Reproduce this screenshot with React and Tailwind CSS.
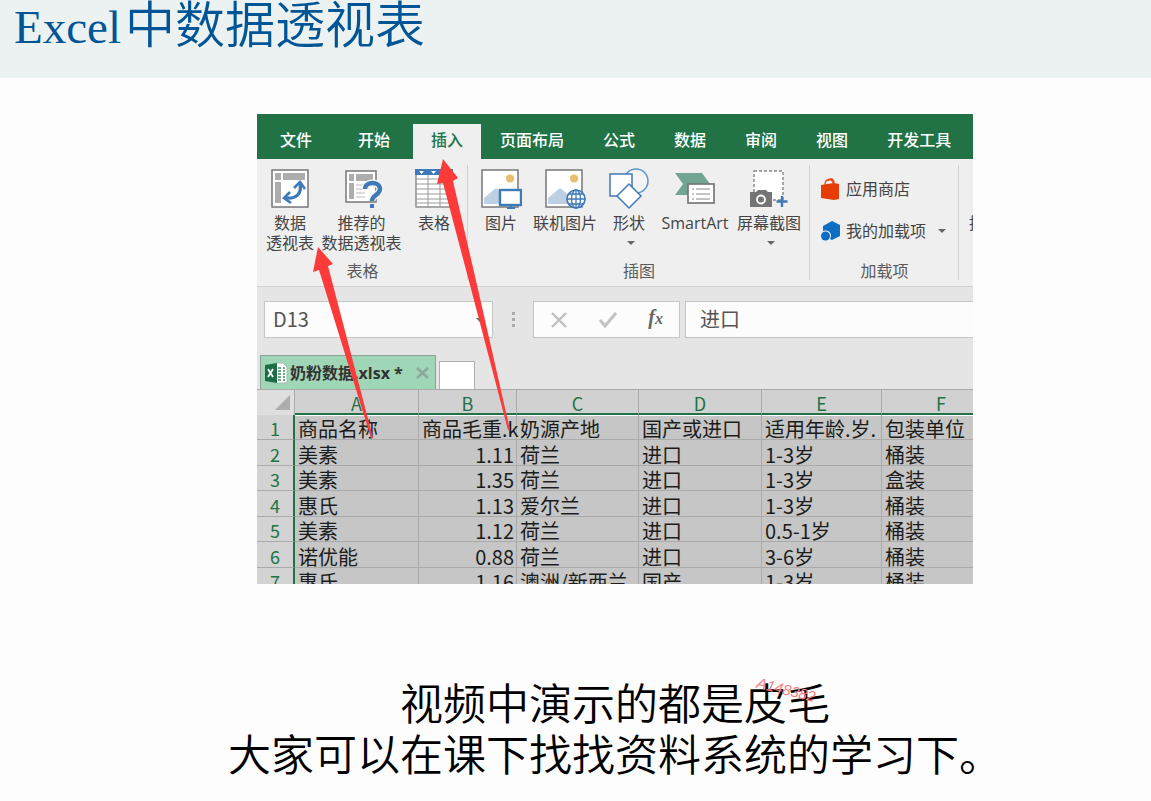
import React from "react";

const menu = ["页面布局", "公式", "数据", "审阅", "视图", "开发工具"];

const columns = ["A", "B", "C", "D", "E", "F"];

const rows = [
  ["商品名称", "商品毛重.k", "奶源产地", "国产或进口", "适用年龄.岁.", "包装单位"],
  ["美素", "1.11", "荷兰", "进口", "1-3岁", "桶装"],
  ["美素", "1.35", "荷兰", "进口", "1-3岁", "盒装"],
  ["惠氏", "1.13", "爱尔兰", "进口", "1-3岁", "桶装"],
  ["美素", "1.12", "荷兰", "进口", "0.5-1岁", "桶装"],
  ["诺优能", "0.88", "荷兰", "进口", "3-6岁", "桶装"],
  ["惠氏", "1.16", "澳洲/新西兰", "国产", "1-3岁", "桶装"],
];

function PivotIcon() {
  return (
    <svg width="40" height="40" viewBox="0 0 40 40" aria-hidden="true">
      <rect x="2" y="1" width="36" height="37" fill="#fff" stroke="#777" strokeWidth="1.5" />
      <path d="M5 4h6v7H5zM13 4h22v7H13zM5 13h6v21H5z" fill="#adadad" />
      <path d="M16 29C26 30 32 25 30 15" fill="none" stroke="#3e7ab8" strokeWidth="3.2" />
      <path d="M20 23l-6 6 7 5M24 19l6-6 5 7" fill="none" stroke="#3e7ab8" strokeWidth="2.6" />
    </svg>
  );
}

function RecommendIcon() {
  return (
    <svg width="42" height="42" viewBox="0 0 42 42" aria-hidden="true">
      <rect x="5" y="3" width="30" height="31" fill="#fff" stroke="#777" strokeWidth="1.5" />
      <path d="M8 6h5v7H8zM15 6h17v7H15zM8 15h5v16H8z" fill="#adadad" />
      <path d="M15 17h9M15 21h7M15 25h9M15 29h9" stroke="#bbb" />
      <path d="M24 21c0-8 15-8 15 0 0 6-8 6-8 12" fill="none" stroke="#f5f5f5" strokeWidth="7" />
      <path d="M24 21c0-8 15-8 15 0 0 6-8 6-8 12" fill="none" stroke="#3e7ab8" strokeWidth="4.4" />
      <path d="M29 36h4v4h-4z" fill="#3e7ab8" />
    </svg>
  );
}

function TableIcon() {
  return (
    <svg width="40" height="40" viewBox="0 0 40 40" aria-hidden="true">
      <rect x="2" y="1" width="36" height="37" fill="#fff" stroke="#888" strokeWidth="1.4" />
      <path d="M2 10h36M2 15h36M2 20h36M2 25h36M2 30h36M2 34h36M14 6v32M26 6v32" stroke="#999" />
      <path d="M1 0h38v6H1z" fill="#3e7ab8" />
      <path d="M5 2h5l-2.500 3zM17 2h5l-2.500 3zM29 2h5l-2.500 3z" fill="#fff" />
    </svg>
  );
}

function Photo() {
  return (
    <>
      <rect x="2" y="1" width="36" height="37" fill="#fff" stroke="#777" strokeWidth="1.5" />
      <circle cx="30" cy="9.500" r="4" fill="#e9be72" />
      <path d="M4 35v-6l12-10 11 9v7z" fill="#bccfe3" />
    </>
  );
}

function PictureIcon() {
  return (
    <svg width="42" height="40" viewBox="0 0 42 40" aria-hidden="true">
      <Photo />
      <rect x="20" y="21" width="21" height="15" fill="#fff" stroke="#3e7ab8" strokeWidth="2.4" />
      <path d="M27 39h8M31 36v3" stroke="#3e7ab8" strokeWidth="2" />
    </svg>
  );
}

function OnlinePictureIcon() {
  return (
    <svg width="42" height="40" viewBox="0 0 42 40" aria-hidden="true">
      <Photo />
      <circle cx="32" cy="30" r="9" fill="#fff" stroke="#3e7ab8" strokeWidth="1.7" />
      <path d="M23 30h18M25 25h14M25 35h14M32 21v18" stroke="#3e7ab8" strokeWidth="1.3" />
      <ellipse cx="32" cy="30" rx="4.500" ry="9" fill="none" stroke="#3e7ab8" strokeWidth="1.3" />
    </svg>
  );
}

function ShapesIcon() {
  return (
    <svg width="40" height="42" viewBox="0 0 40 42" aria-hidden="true">
      <circle cx="27" cy="13" r="12" fill="#f4f4f4" stroke="#5b93cc" strokeWidth="1.5" />
      <rect x="1" y="6" width="22" height="22" fill="#fff" stroke="#3e7ab8" strokeWidth="1.5" />
      <path d="M20 16l12 12-12 12L8 28z" fill="#fff" stroke="#3e7ab8" strokeWidth="1.5" />
    </svg>
  );
}

function SmartArtIcon() {
  return (
    <svg width="40" height="40" viewBox="0 0 40 40" aria-hidden="true">
      <path d="M0 4h27l8 11-9 11H0l8-11z" fill="#72a592" />
      <rect x="13" y="15" width="26" height="19" fill="#fff" stroke="#777" strokeWidth="1.7" />
      <path d="M21 20h14M21 25h14M21 30h14M17 20h2M17 25h2M17 30h2" stroke="#888" />
    </svg>
  );
}

function ScreenshotIcon() {
  return (
    <svg width="40" height="40" viewBox="0 0 40 40" aria-hidden="true">
      <rect x="5" y="2" width="29" height="29" fill="#fff" stroke="#888" strokeWidth="1.400" strokeDasharray="3 2" />
      <path d="M1 23h6l2-2h8l2 2h4v15H1z" fill="#747474" />
      <circle cx="12" cy="30.500" r="4" fill="none" stroke="#fff" strokeWidth="1.800" />
      <path d="M33 27v11M27.500 32.500h11" stroke="#3e7ab8" strokeWidth="2.400" />
    </svg>
  );
}

function Caret() {
  return (
    <svg width="8" height="4" viewBox="0 0 8 4" aria-hidden="true">
      <path d="M0 0h8L4 4z" fill="#666" />
    </svg>
  );
}

function Tool({ icon, lines, width, caret }) {
  return (
    <button type="button" className={`flex shrink-0 flex-col items-center ${width}`}>
      <span className="flex h-[46px] items-center pb-0.5">{icon}</span>
      {lines.map((line) => (
        <span key={line} className="whitespace-nowrap text-[16px] leading-5">
          {line}
        </span>
      ))}
      {caret && (
        <span className="flex h-5 items-center pl-1">
          <Caret />
        </span>
      )}
    </button>
  );
}

function Group({ label, children }) {
  return (
    <section className="flex shrink-0 flex-col justify-between">
      <div className="flex">{children}</div>
      <h2 className="text-center text-[16px] leading-5 text-[#5a5a5a]">{label}</h2>
    </section>
  );
}

function Divider() {
  return <div className="-ml-px my-1.5 w-px shrink-0 bg-[#d2d2d2]" />;
}

function Ribbon() {
  return (
    <div className="flex h-[128px] overflow-hidden border-b border-[#d0d0d0] bg-[#efefef] text-[#444]">
      <div className="flex shrink-0 pb-[5px] pt-2">
        <Group label="表格">
          <Tool width="w-[66px]" icon={<PivotIcon />} lines={["数据", "透视表"]} />
          <Tool width="w-[77px]" icon={<RecommendIcon />} lines={["推荐的", "数据透视表"]} />
          <Tool width="w-[68px]" icon={<TableIcon />} lines={["表格"]} />
        </Group>
      </div>
      <Divider />
      <div className="flex shrink-0 pb-[5px] pt-2">
        <Group label="插图">
          <Tool width="w-[66px]" icon={<PictureIcon />} lines={["图片"]} />
          <Tool width="w-[62px]" icon={<OnlinePictureIcon />} lines={["联机图片"]} />
          <Tool width="w-[66px]" icon={<ShapesIcon />} lines={["形状"]} caret />
          <Tool width="w-[66px]" icon={<SmartArtIcon />} lines={["SmartArt"]} />
          <Tool width="w-[82px]" icon={<ScreenshotIcon />} lines={["屏幕截图"]} caret />
        </Group>
      </div>
      <Divider />
      <div className="flex shrink-0 pb-[5px] pt-2">
        <Group label="加载项">
          <div className="flex w-[149px] flex-col gap-[18px] pl-[11px] pt-2.5">
            <button type="button" className="flex items-center gap-1.5 text-[16px] leading-6">
              <svg width="19" height="22" viewBox="0 0 19 22" aria-hidden="true">
                <path d="M0 7l13-2 5 1v15l-5 1-13-2z" fill="#e63c05" />
                <path d="M4 7c0-7 7-7 8-2M7 3c2-4 6-2 6 2" fill="none" stroke="#e8501f" strokeWidth="1.400" />
              </svg>
              应用商店
            </button>
            <button type="button" className="flex items-center gap-1.5 text-[16px] leading-6">
              <svg width="19" height="20" viewBox="0 0 19 20" aria-hidden="true">
                <path d="M2 5l9-5 8 4v11l-8 4-2-1c3-5-1-10-7-8z" fill="#0c6fc4" />
                <circle cx="4.500" cy="15" r="4.500" fill="#0c6fc4" />
              </svg>
              我的加载项
              <span className="pl-1.5">
                <Caret />
              </span>
            </button>
          </div>
        </Group>
      </div>
      <Divider />
      <button type="button" className="shrink-0 self-center pl-2.5 text-[16px] leading-5">
        推
      </button>
    </div>
  );
}

function FormulaBar() {
  return (
    <div className="flex items-center pl-[7px] pt-3.5">
      <div className="flex h-[37px] w-[229px] shrink-0 items-center border border-[#c6c6c6] bg-[#fcfcfc] pl-2 pr-2">
        <input
          aria-label="名称框"
          defaultValue="D13"
          className="h-full w-full min-w-0 bg-transparent pb-[3px] font-['Noto_Sans_CJK_SC',sans-serif] text-[20px] text-[#555] outline-none"
        />
        <Caret />
      </div>
      <div className="flex w-10 shrink-0 flex-col items-center gap-[3px]">
        <i className="size-[3px] bg-[#aaa]" />
        <i className="size-[3px] bg-[#aaa]" />
        <i className="size-[3px] bg-[#aaa]" />
      </div>
      <div className="flex h-[37px] w-[147px] shrink-0 items-center justify-between border border-[#c6c6c6] bg-[#fcfcfc] px-4">
        <button type="button" aria-label="取消">
          <svg width="18" height="16" viewBox="0 0 18 16">
            <path d="M2 1l14 14M16 1L2 15" stroke="#bfbfbf" strokeWidth="2.400" />
          </svg>
        </button>
        <button type="button" aria-label="输入">
          <svg width="18" height="16" viewBox="0 0 18 16">
            <path d="M1 8l5 6L17 1" fill="none" stroke="#c2c2c2" strokeWidth="3" />
          </svg>
        </button>
        <button
          type="button"
          className="pb-1 font-['Liberation_Serif',serif] text-[20px] font-bold italic leading-5 text-[#666]"
        >
          f<span className="text-[16px]">x</span>
        </button>
      </div>
      <input
        aria-label="编辑栏"
        defaultValue="进口"
        className="ml-[5px] h-[37px] min-w-0 flex-1 border border-r-0 border-[#c6c6c6] bg-[#fcfcfc] pb-[3px] pl-3.5 text-[20px] text-[#555] outline-none"
      />
    </div>
  );
}

function FileTabs() {
  return (
    <div className="flex items-end gap-[3px] pl-[3px] pt-[17px]">
      <div className="flex h-[34px] w-[176px] items-center border border-b-0 border-[#8f9f95] bg-[#9fd6b7] pl-1 pr-1.5">
        <svg width="23" height="22" viewBox="0 0 23 22" aria-hidden="true">
          <path d="M9 1h9l4 4v16H9z" fill="#fff" stroke="#a5bdb0" />
          <path d="M13 6h3M18 6h2M13 9h3M18 9h2M13 12h3M18 12h2M13 15h3M18 15h2M13 18h3M18 18h2" stroke="#3c8a5f" strokeWidth="1.500" />
          <path d="M0 3l12-2v20L0 19z" fill="#1b6f44" />
          <path d="M3 7l5 8M8 7l-5 8" stroke="#fff" strokeWidth="1.800" />
        </svg>
        <span className="ml-0.5 whitespace-nowrap text-[16px] font-bold leading-6 text-[#333]">
          奶粉数据.xlsx *
        </span>
        <button type="button" aria-label="关闭" className="ml-auto">
          <svg width="13" height="12" viewBox="0 0 13 12">
            <path d="M1 1l11 10M12 1L1 11" stroke="#8fa89b" strokeWidth="2.600" />
          </svg>
        </button>
      </div>
      <button
        type="button"
        aria-label="新建"
        className="h-7 w-9 border border-b-0 border-[#b0b0b0] bg-white"
      />
    </div>
  );
}

function Sheet() {
  return (
    <table className="w-[744px] table-fixed border-separate border-spacing-0 font-['Noto_Sans_CJK_SC',sans-serif]">
      <colgroup>
        <col className="w-[38px]" />
        <col className="w-[124px]" />
        <col className="w-[98px]" />
        <col className="w-[122px]" />
        <col className="w-[123px]" />
        <col className="w-[120px]" />
        <col className="w-[119px]" />
      </colgroup>
      <thead>
        <tr className="h-[26px]">
          <th className="border-r border-t border-[#aaa] bg-[#dedede] p-0">
            <svg className="ml-auto mr-1" width="15" height="15" viewBox="0 0 15 15" aria-hidden="true">
              <path d="M15 0v15H0z" fill="#adadad" />
            </svg>
          </th>
          {columns.map((name) => (
            <th
              key={name}
              scope="col"
              className="border-b-2 border-r border-t border-b-[#217346] border-r-[#aaa] border-t-[#aaa] bg-[#d1d1d1] p-0 pt-0.5 text-[18px] font-normal leading-5 text-[#217346]"
            >
              {name}
            </th>
          ))}
        </tr>
      </thead>
      <tbody>
        {rows.map((cells, r) => (
          <tr key={r} className="odd:h-[25px] even:h-[26px]">
            <th
              scope="row"
              className="border-b border-r-2 border-b-[#aaa] border-r-[#217346] bg-[#d3d3d3] p-0 pt-0.5 text-[18px] font-normal leading-[22px] text-[#217346]"
            >
              {r + 1}
            </th>
            {cells.map((cell, c) => (
              <td
                key={c}
                className={`whitespace-nowrap border-b border-r border-[#aaa] bg-[#c6c6c6] pb-0 pl-[3px] pt-1 text-[20px] leading-5 text-[#1c1c1c] ${
                  r === 0 ? "shadow-[inset_0_1px_0_#fff]" : ""
                } ${c === 1 && r > 0 ? "pr-[2px] text-right" : "pr-0"}`}
              >
                {cell}
              </td>
            ))}
          </tr>
        ))}
      </tbody>
    </table>
  );
}

function Arrows() {
  return (
    <svg
      className="pointer-events-none absolute left-0 top-0"
      width="716"
      height="470"
      viewBox="257 114 716 470"
      aria-hidden="true"
    >
      <path d="M318 247L333 264 328 266 373 438H371L319 270 313 272z" fill="#fc3a3a" />
      <path d="M443 159L458 178 453 181 477 285 510 430H508L470 285 443 183 437 184z" fill="#fc3a3a" />
    </svg>
  );
}

function Excel() {
  return (
    <figure className="relative h-[470px] w-full max-w-[716px] overflow-hidden bg-[#e5e5e5] font-['Open_Sans','Noto_Sans_CJK_SC',sans-serif]">
      <nav className="flex h-[45px] items-end bg-[#217346] text-[16px] font-medium leading-6 text-white">
        <button type="button" className="h-[35px] shrink-0 px-[23px] pb-1">文件</button>
        <button type="button" className="h-[35px] shrink-0 px-[23px] pb-1">开始</button>
        <button type="button" className="h-[35px] shrink-0 bg-[#efefef] px-[18px] pb-1 text-[#217346]">插入</button>
        <div className="flex gap-px">
          {menu.map((name) => (
            <button key={name} type="button" className="h-[35px] shrink-0 px-[19px] pb-1">
              {name}
            </button>
          ))}
        </div>
      </nav>
      <Ribbon />
      <FormulaBar />
      <FileTabs />
      <Sheet />
      <Arrows />
    </figure>
  );
}

export default function App() {
  return (
    <div className="min-h-screen bg-[#fdfdfd]">
      <header className="h-[78px] bg-[#ecf1f1] pl-3.5">
        <h1 className="whitespace-nowrap font-['Liberation_Serif','Noto_Sans_CJK_SC',serif] text-[50px] font-[350] leading-[52px] text-[#005596]">
          <span className="mr-1 text-[47px]">Excel</span>中数据透视表
        </h1>
      </header>
      <main className="flex flex-col items-center pl-[79px] pt-9">
        <Excel />
        <p className="relative mt-[92px] text-center font-['Noto_Sans_CJK_SC',sans-serif] text-[43px] font-[350] leading-[51px] text-black">
          视频中演示的都是皮毛
          <br />
          大家可以在课下找找资料系统的学习下。
          <span className="absolute left-[528px] top-1 rotate-[14deg] font-['Liberation_Sans',sans-serif] text-[15px] font-normal italic leading-5 text-[#f98080]">
            A148382
          </span>
        </p>
      </main>
    </div>
  );
}
